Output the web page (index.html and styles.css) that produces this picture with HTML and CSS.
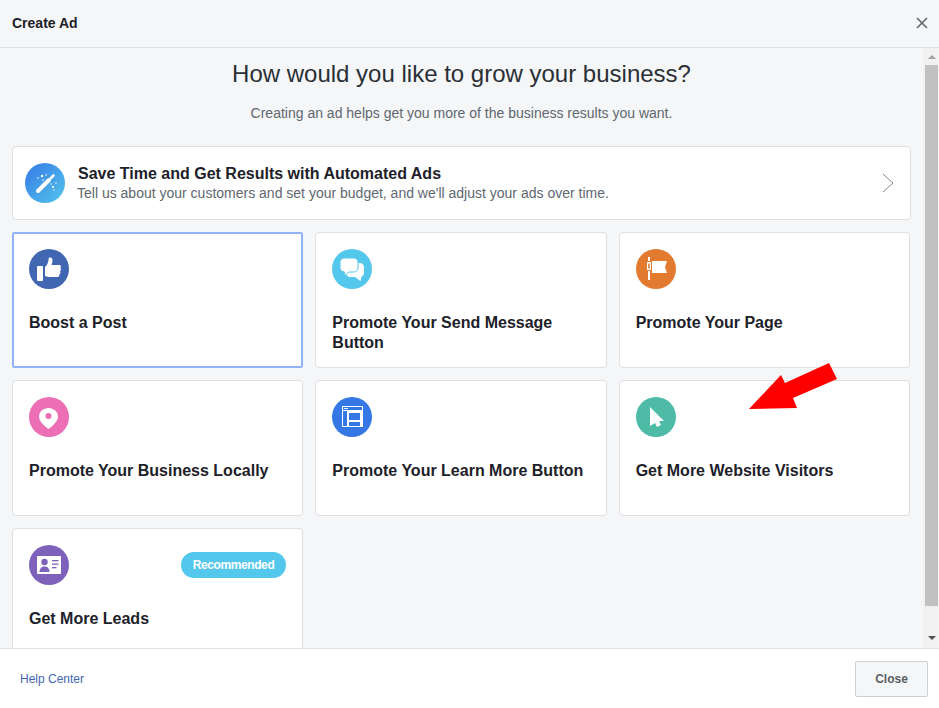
FILE: index.html
```html
<!DOCTYPE html>
<html lang="en">
<head>
  <meta charset="UTF-8">
  <meta name="viewport" content="width=device-width, initial-scale=1.0">
  <title>Create Ad</title>
  <link rel="stylesheet" href="styles.css">
</head>
<body>
  <div class="dialog">
    <header class="dialog-header">
      <h1>Create Ad</h1>
      <svg class="close-x" width="12" height="12" viewBox="0 0 12 12"><path d="M1 1l10 10M11 1L1 11" stroke="#606770" stroke-width="1.6" fill="none"/></svg>
    </header>

    <div class="dialog-middle">
      <main class="dialog-body">
        <h2>How would you like to grow your business?</h2>
        <p class="lead">Creating an ad helps get you more of the business results you want.</p>

        <div class="auto-card">
          <span class="icon icon-auto">
            <svg width="40" height="40" viewBox="0 0 40 40">
              <path d="M13 28l11-11" stroke="#fff" stroke-width="4" stroke-linecap="round"/>
              <path d="M26 15l2.500-2.500" stroke="#fff" stroke-width="2.500" stroke-linecap="round"/>
              <g fill="#fff"><circle cx="17" cy="13" r="1.200"/><circle cx="13" cy="15" r=".8"/><circle cx="21" cy="12" r=".8"/><circle cx="18" cy="17" r=".8"/><circle cx="28" cy="24" r="1"/><circle cx="31" cy="20" r=".8"/><circle cx="26" cy="21" r=".7"/><circle cx="29" cy="27" r=".7"/></g>
            </svg>
          </span>
          <div class="auto-text">
            <strong>Save Time and Get Results with Automated Ads</strong>
            <span>Tell us about your customers and set your budget, and we'll adjust your ads over time.</span>
          </div>
          <svg class="chevron" width="12" height="20" viewBox="0 0 12 20"><path d="M1 1l10 9-10 9" stroke="#7f858d" stroke-width="1" fill="none"/></svg>
        </div>

        <div class="goal-grid">
          <div class="goal-card selected">
            <span class="icon icon-boost">
              <svg width="40" height="40" viewBox="0 0 40 40"><g fill="#fff"><rect x="8" y="17" width="6" height="15" rx="1"/><path d="M16 18c2.500-2 3.500-5 3.700-8.500.1-1.500 3.300-1.500 3.700 1 .3 2-.3 4-1 5.500h7.800c2 0 2.300 2.300 1 3 1.300.8 1 2.800-.3 3.200 1 .9.600 2.700-.7 3.100.6 1 0 2.700-1.700 2.700H20c-2 0-3-1-4-1z"/></g></svg>
            </span>
            <h3>Boost a Post</h3>
          </div>
          <div class="goal-card">
            <span class="icon icon-message">
              <svg width="40" height="40" viewBox="0 0 40 40"><path d="M21 14h7c2.200 0 4 1.800 4 4v6c0 1.800-1 3-2.500 3.500l-1 4.500-5.500-4h-5c-2.200 0-4-1.800-4-4z" fill="#fff"/><path d="M12 9h10c2.200 0 4 1.800 4 4v6c0 2.200-1.800 4-4 4h-5l-5 4 .5-4C10 22.700 8 21.200 8 19v-6c0-2.200 1.800-4 4-4z" fill="#fff" stroke="#54c7ec" stroke-width="1"/></svg>
            </span>
            <h3>Promote Your Send Message Button</h3>
          </div>
          <div class="goal-card">
            <span class="icon icon-page">
              <svg width="40" height="40" viewBox="0 0 40 40"><g fill="#fff"><rect x="12" y="8" width="2" height="4"/><path d="M11 13h4v8h-4zm1.200 1.500v5h1.600v-5z" fill-rule="evenodd"/><rect x="12" y="22" width="2" height="9"/><path d="M16 12h15l-2 6 2 6H16z"/></g></svg>
            </span>
            <h3>Promote Your Page</h3>
          </div>
          <div class="goal-card">
            <span class="icon icon-local">
              <svg width="40" height="40" viewBox="0 0 40 40"><path d="M19.500 11c5.200 0 9.500 3.600 9.500 8.500 0 4.500-5.200 9.500-9.500 12.500-4.300-3-9.500-8-9.500-12.500 0-4.900 4.300-8.500 9.500-8.500zm0 5a3 3 0 1 0 0 6 3 3 0 0 0 0-6z" fill="#fff" fill-rule="evenodd"/></svg>
            </span>
            <h3>Promote Your Business Locally</h3>
          </div>
          <div class="goal-card">
            <span class="icon icon-learn">
              <svg width="40" height="40" viewBox="0 0 40 40"><path d="M10 9h21v21H10zm1 1v3h19v-3zm0 4v15h4V14zm6 2v7h11v-7zm0 9v4h11v-4z" fill="#fff" fill-rule="evenodd"/><rect x="12" y="11" width="4" height="1" fill="#fff"/></svg>
            </span>
            <h3>Promote Your Learn More Button</h3>
          </div>
          <div class="goal-card">
            <span class="icon icon-web">
              <svg width="40" height="40" viewBox="0 0 40 40"><path d="M14 10l14 14h-5l2 4-4 2-2-4-5 3z" fill="#fff"/></svg>
            </span>
            <h3>Get More Website Visitors</h3>
          </div>
          <div class="goal-card">
            <div class="card-top">
              <span class="icon icon-leads">
                <svg width="40" height="40" viewBox="0 0 40 40"><path d="M9 11h22c.6 0 1 .4 1 1v16c0 .6-.4 1-1 1H9c-.6 0-1-.4-1-1V12c0-.6.4-1 1-1z" fill="#fff"/><g fill="#7e61bb"><circle cx="15.500" cy="17" r="3.200"/><path d="M10.500 27c0-3.500 2-5.500 5-5.500s5 2 5 5.500z"/><rect x="23" y="15" width="6.500" height="1.300"/><rect x="23" y="18.500" width="6.500" height="1.300"/><rect x="23" y="22" width="4.500" height="1.300"/></g></svg>
              </span>
              <span class="badge">Recommended</span>
            </div>
            <h3>Get More Leads</h3>
          </div>
        </div>
      </main>

      <div class="scrollbar">
        <span class="arrow-up"></span>
        <span class="thumb"></span>
        <span class="arrow-down"></span>
      </div>
    </div>

    <footer class="dialog-footer">
      <a href="#">Help Center</a>
      <button type="button">Close</button>
    </footer>
  </div>

  <!-- red annotation arrow drawn over the page -->
  <svg class="annotation" width="939" height="708" viewBox="0 0 939 708"><polygon points="749,409 781,375 785,383 829,363 837,379 793,398 797,408" fill="#ff0000"/></svg>
</body>
</html>
```

FILE: styles.css
```css
html, body {
  margin: 0;
  height: 100%;
}

body {
  font-family: "Liberation Sans", Arial, sans-serif;
  background-color: #fff;
  overflow: hidden;
}

.dialog {
  display: flex;
  flex-direction: column;
  height: 708px;
}

.dialog-header {
  display: flex;
  align-items: center;
  justify-content: space-between;
  height: 45px;
  padding: 0 11px 2px 12px;
  background-color: #f5f6f7;
  border-bottom: 1px solid #dddfe2;
  flex: none;
}

.dialog-header h1 {
  margin: 0;
  font-size: 14px;
  font-weight: bold;
  color: #1d2129;
}

.dialog-middle {
  display: flex;
  flex: 1;
  min-height: 0;
  background-color: #f5f6f7;
}

.dialog-body {
  flex: 1;
  min-width: 0;
  overflow: hidden;
  padding: 12px 0 0 12px;
}

.dialog-body h2 {
  margin: 0;
  width: 899px;
  font-size: 24px;
  line-height: 28px;
  font-weight: normal;
  text-align: center;
  color: #2b2f36;
}

.lead {
  margin: 16px 0 24px;
  width: 899px;
  font-size: 14px;
  line-height: 18px;
  text-align: center;
  color: #606770;
}

.auto-card {
  display: flex;
  align-items: center;
  box-sizing: border-box;
  width: 899px;
  height: 74px;
  padding: 0 16px 0 12px;
  background-color: #fff;
  border: 1px solid #dddfe2;
  border-radius: 4px;
}

.auto-text {
  flex: 1;
  display: flex;
  flex-direction: column;
  margin-left: 12px;
  padding-top: 1px;
}

.auto-text strong {
  padding-left: 1px;
  margin-bottom: -1px;
  font-size: 16px;
  line-height: 20px;
  color: #1d2129;
}

.auto-text span {
  font-size: 14px;
  line-height: 20px;
  color: #606770;
}

.goal-grid {
  display: grid;
  grid-template-columns: repeat(3, 1fr);
  grid-auto-rows: 136px;
  gap: 12px;
  width: 898px;
  margin-top: 12px;
}

.goal-card {
  box-sizing: border-box;
  padding: 16px;
  background-color: #fff;
  border: 1px solid #dddfe2;
  border-radius: 4px;
}

.goal-card.selected {
  border: 2px solid #8eb4f5;
  border-radius: 2px;
  padding: 15px;
}

.goal-card h3 {
  margin: 24px 0 0;
  font-size: 16px;
  line-height: 20px;
  font-weight: bold;
  color: #1d2129;
}

.card-top {
  display: flex;
  align-items: flex-start;
  justify-content: space-between;
}

.badge {
  margin: 7px 0 0;
  height: 26px;
  padding: 0 12px;
  border-radius: 13px;
  background-color: #54c7ec;
  color: #fff;
  font-size: 12px;
  font-weight: bold;
  letter-spacing: -0.4px;
  line-height: 26px;
}

.icon {
  display: block;
  flex: none;
  width: 40px;
  height: 40px;
  border-radius: 50%;
}

.icon svg {
  display: block;
}

.icon-auto { background: linear-gradient(135deg, #3578e5, #54c7ec); }
.icon-boost { background-color: #4267b2; }
.icon-message { background-color: #54c7ec; }
.icon-page { background-color: #e27a30; }
.icon-local { background-color: #ec6fb5; }
.icon-learn { background-color: #3578e5; }
.icon-web { background-color: #4dbba6; }
.icon-leads { background-color: #7e61bb; }

.scrollbar {
  flex: none;
  display: flex;
  flex-direction: column;
  align-items: center;
  box-sizing: border-box;
  width: 15px;
  padding-left: 2px;
  margin-right: 1px;
  background-color: #f1f1f1;
}

.thumb {
  display: block;
  width: 13px;
  height: 541px;
  margin-top: 6px;
  background-color: #c1c1c1;
}

.arrow-up {
  display: block;
  margin-top: 7px;
  border-left: 4px solid transparent;
  border-right: 4px solid transparent;
  border-bottom: 4px solid #a3a3a3;
}

.arrow-down {
  display: block;
  margin-top: 30px;
  border-left: 4px solid transparent;
  border-right: 4px solid transparent;
  border-top: 4px solid #505050;
}

.dialog-footer {
  display: flex;
  align-items: center;
  justify-content: space-between;
  flex: none;
  height: 59px;
  padding: 0 11px 0 20px;
  background-color: #fff;
  border-top: 1px solid #dddfe2;
}

.dialog-footer a {
  font-size: 12px;
  color: #4267b2;
  text-decoration: none;
}

.dialog-footer button {
  width: 73px;
  height: 36px;
  font-family: inherit;
  font-size: 12px;
  font-weight: bold;
  color: #5a5f67;
  background-color: #f5f6f7;
  border: 1px solid #ccd0d5;
  border-radius: 2px;
}

.annotation {
  position: absolute;
  top: 0;
  left: 0;
  pointer-events: none;
}
```
